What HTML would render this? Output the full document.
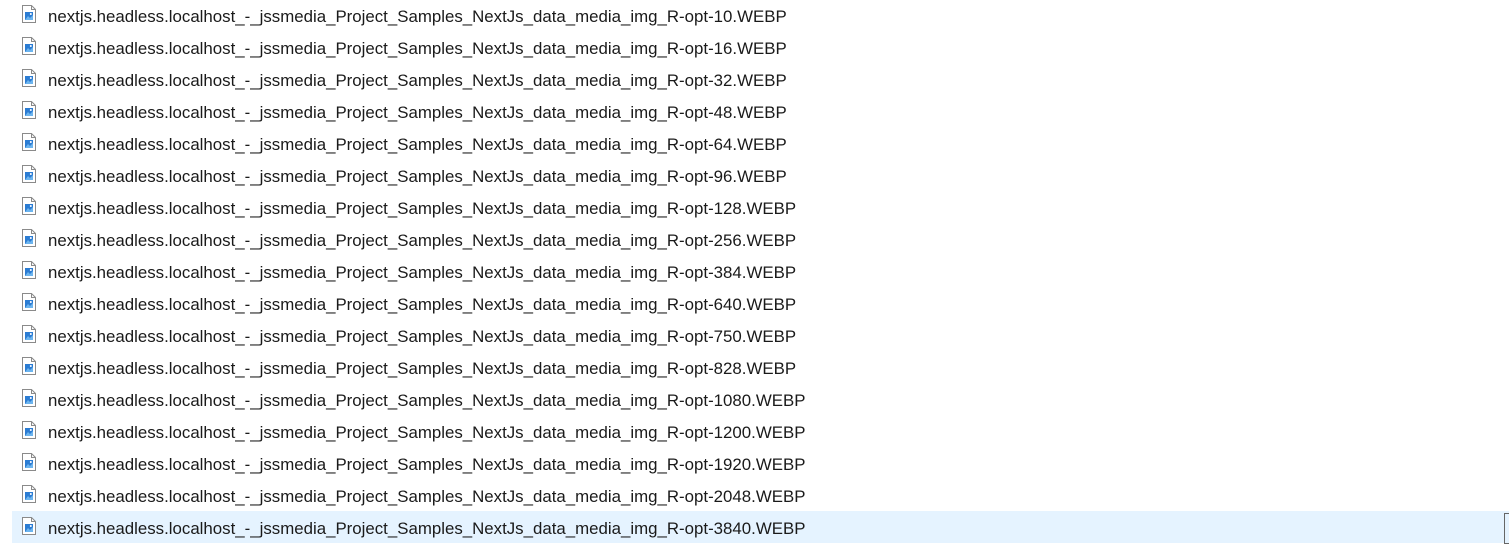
<!DOCTYPE html>
<html><head><meta charset="utf-8"><style>
body{margin:0;width:1509px;height:548px;background:#fff;overflow:hidden;font-family:"Liberation Sans",sans-serif;}
.r{position:absolute;left:12px;width:1497px;height:32px;}
.r.sel{background:#e5f3ff;}
.ic{position:absolute;left:9px;top:6px;width:16px;height:18px;}
.t{position:absolute;left:36px;top:2px;line-height:32px;font-size:16.85px;color:#1a1a1a;white-space:nowrap;}
.br{position:absolute;left:1504px;top:513px;width:4px;height:29px;border:1px solid #666;border-right:none;}
</style></head><body>
<div id="c"></div>
<div class="br"></div>
<script>
var s=[10,16,32,48,64,96,128,256,384,640,750,828,1080,1200,1920,2048,3840];
var h='';
s.forEach(function(n,i){
h+='<div class="r'+(i==16?' sel':'')+'" style="top:'+(32*i-1)+'px"><svg class="ic" viewBox="0 0 16 18"><path d="M1.5 0.5H10.5L14.5 4.5V17.5H1.5Z" fill="#fff" stroke="#8a8a8a"/><path d="M10.5 0.5V4.5H14.5" fill="none" stroke="#8a8a8a"/><rect x="4" y="7" width="8" height="8" fill="#2b7cd3"/><path d="M4 15L7 11L9 13L12 10V15Z" fill="#6cb4ee"/><circle cx="9.8" cy="9" r="1" fill="#fff"/></svg><div class="t">nextjs.headless.localhost_-_jssmedia_Project_Samples_NextJs_data_media_img_R-opt-'+n+'.WEBP</div></div>';
});
document.getElementById('c').innerHTML=h;
</script>
</body></html>
